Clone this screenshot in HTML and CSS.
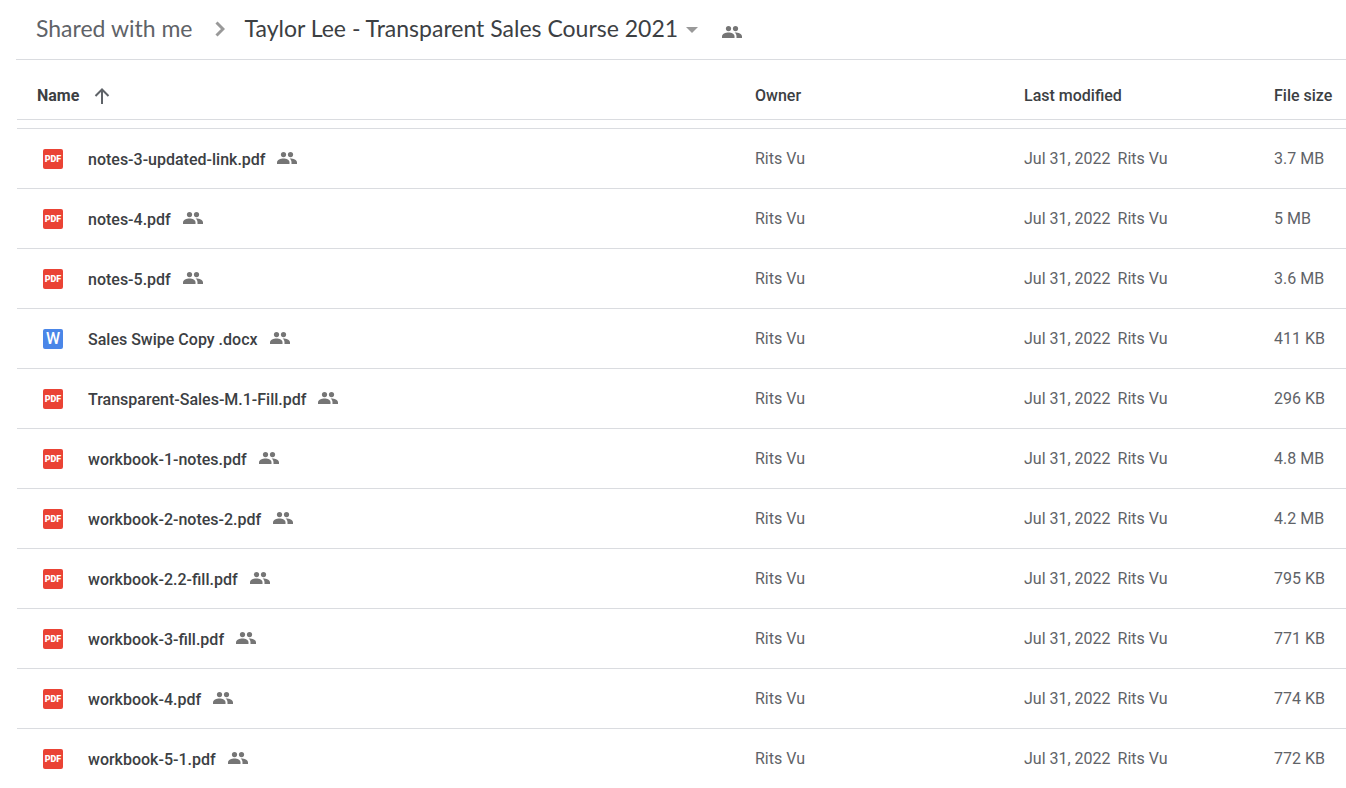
FILE: index.html
```html
<!DOCTYPE html>
<html lang="en">
<head>
  <meta charset="utf-8">
  <meta name="viewport" content="width=device-width, initial-scale=1">
  <title>Taylor Lee - Transparent Sales Course 2021</title>
  <link rel="stylesheet" href="styles.css">
</head>
<body>

  <!-- icons used in the rows below -->
  <svg class="sprite" aria-hidden="true">
    <symbol id="people" viewBox="2 5 20 12">
      <circle cx="8.5" cy="7.6" r="2.6"/>
      <circle cx="15.5" cy="7.6" r="2.6"/>
      <path d="M2 17v-1.5C2 12.700 5.500 11.500 8.500 11.500s6 1.200 6 4V17z"/>
      <path d="M15 11.500c3.500 0 7 1.200 7 4V17h-5.500v-1.500c0-1.600-.6-2.900-1.900-4z"/>
    </symbol>
    <symbol id="pdf" viewBox="0 0 20 20">
      <rect width="20" height="20" rx="2" fill="#ea4335"/>
      <text x="10" y="13" class="pdf-text">PDF</text>
    </symbol>
    <symbol id="word" viewBox="0 0 20 20">
      <rect width="20" height="20" rx="2" fill="#4a86e8"/>
      <text x="10" y="15" class="word-text">W</text>
    </symbol>
  </svg>

  <header class="path">
    <a href="#shared" class="parent">Shared with me</a>
    <svg class="chevron" viewBox="0 0 10 16" aria-hidden="true"><path d="M1.500 1.500L8 8l-6.500 6.500"/></svg>
    <button type="button" class="folder">
      Taylor Lee - Transparent Sales Course 2021
      <span class="caret"></span>
    </button>
    <svg class="people" role="img" aria-label="Shared"><use href="#people"/></svg>
  </header>

  <main>
    <table class="files">
      <thead>
        <tr>
          <th class="name" scope="col" aria-sort="ascending">
            <button type="button" class="sort">Name
              <svg viewBox="0 0 16 16" aria-hidden="true"><path d="M8 16V2M1.500 8L8 1.500 14.500 8"/></svg>
            </button>
          </th>
          <th class="owner" scope="col">Owner</th>
          <th class="modified" scope="col">Last modified</th>
          <th class="size" scope="col">File size</th>
        </tr>
      </thead>
      <tbody>
        <tr>
          <td><div class="file"><svg class="type"><use href="#pdf"/></svg><a href="#">notes-3-updated-link.pdf</a><svg class="people"><use href="#people"/></svg></div></td>
          <td>Rits Vu</td>
          <td>Jul 31, 2022 <span class="by">Rits Vu</span></td>
          <td>3.7 MB</td>
        </tr>
        <tr>
          <td><div class="file"><svg class="type"><use href="#pdf"/></svg><a href="#">notes-4.pdf</a><svg class="people"><use href="#people"/></svg></div></td>
          <td>Rits Vu</td>
          <td>Jul 31, 2022 <span class="by">Rits Vu</span></td>
          <td>5 MB</td>
        </tr>
        <tr>
          <td><div class="file"><svg class="type"><use href="#pdf"/></svg><a href="#">notes-5.pdf</a><svg class="people"><use href="#people"/></svg></div></td>
          <td>Rits Vu</td>
          <td>Jul 31, 2022 <span class="by">Rits Vu</span></td>
          <td>3.6 MB</td>
        </tr>
        <tr>
          <td><div class="file"><svg class="type"><use href="#word"/></svg><a href="#">Sales Swipe Copy .docx</a><svg class="people"><use href="#people"/></svg></div></td>
          <td>Rits Vu</td>
          <td>Jul 31, 2022 <span class="by">Rits Vu</span></td>
          <td>411 KB</td>
        </tr>
        <tr>
          <td><div class="file"><svg class="type"><use href="#pdf"/></svg><a href="#">Transparent-Sales-M.1-Fill.pdf</a><svg class="people"><use href="#people"/></svg></div></td>
          <td>Rits Vu</td>
          <td>Jul 31, 2022 <span class="by">Rits Vu</span></td>
          <td>296 KB</td>
        </tr>
        <tr>
          <td><div class="file"><svg class="type"><use href="#pdf"/></svg><a href="#">workbook-1-notes.pdf</a><svg class="people"><use href="#people"/></svg></div></td>
          <td>Rits Vu</td>
          <td>Jul 31, 2022 <span class="by">Rits Vu</span></td>
          <td>4.8 MB</td>
        </tr>
        <tr>
          <td><div class="file"><svg class="type"><use href="#pdf"/></svg><a href="#">workbook-2-notes-2.pdf</a><svg class="people"><use href="#people"/></svg></div></td>
          <td>Rits Vu</td>
          <td>Jul 31, 2022 <span class="by">Rits Vu</span></td>
          <td>4.2 MB</td>
        </tr>
        <tr>
          <td><div class="file"><svg class="type"><use href="#pdf"/></svg><a href="#">workbook-2.2-fill.pdf</a><svg class="people"><use href="#people"/></svg></div></td>
          <td>Rits Vu</td>
          <td>Jul 31, 2022 <span class="by">Rits Vu</span></td>
          <td>795 KB</td>
        </tr>
        <tr>
          <td><div class="file"><svg class="type"><use href="#pdf"/></svg><a href="#">workbook-3-fill.pdf</a><svg class="people"><use href="#people"/></svg></div></td>
          <td>Rits Vu</td>
          <td>Jul 31, 2022 <span class="by">Rits Vu</span></td>
          <td>771 KB</td>
        </tr>
        <tr>
          <td><div class="file"><svg class="type"><use href="#pdf"/></svg><a href="#">workbook-4.pdf</a><svg class="people"><use href="#people"/></svg></div></td>
          <td>Rits Vu</td>
          <td>Jul 31, 2022 <span class="by">Rits Vu</span></td>
          <td>774 KB</td>
        </tr>
        <tr>
          <td><div class="file"><svg class="type"><use href="#pdf"/></svg><a href="#">workbook-5-1.pdf</a><svg class="people"><use href="#people"/></svg></div></td>
          <td>Rits Vu</td>
          <td>Jul 31, 2022 <span class="by">Rits Vu</span></td>
          <td>772 KB</td>
        </tr>
      </tbody>
    </table>
  </main>

</body>
</html>
```
FILE: styles.css
```css
* {
  box-sizing: border-box;
}

body {
  margin: 0;
  background: #fff;
  color: #5f6368;
  font-family: Roboto, Arial, sans-serif;
  font-size: 16px;
}

a {
  color: inherit;
  text-decoration: none;
}

button {
  padding: 0;
  border: 0;
  background: none;
  color: inherit;
  font: inherit;
  cursor: pointer;
}

.sprite {
  display: none;
}

/* breadcrumb */
.path {
  display: flex;
  align-items: center;
  height: 60px;
  margin-left: 16px;
  padding: 0 20px 4px;
  border-bottom: 1px solid #dadce0;
  font-family: Lato, Roboto, sans-serif;
  font-size: 23px;
  white-space: nowrap;
}

.chevron {
  width: 10px;
  height: 16px;
  margin: 2px 20px 0 22px;
  fill: none;
  stroke: #999;
  stroke-width: 3;
}

.folder {
  display: flex;
  align-items: center;
  color: #3c4043;
}

.caret {
  margin: 4px 0 0 8px;
  border: 6px solid transparent;
  border-top-color: #999;
  border-bottom: 0;
}

.people {
  flex: none;
  width: 20px;
  height: 12px;
  fill: #757575;
}

.path .people {
  height: 14px;
  margin: 8px 0 0 24px;
}

/* file list */
main {
  margin-left: 17px;
}

.files {
  width: 100%;
  table-layout: fixed;
  border-spacing: 0;
}

.files th,
.files td {
  height: 60px;
  padding: 0;
  text-align: left;
  white-space: nowrap;
}

.files th {
  padding-top: 12px;
  border-bottom: 1px solid #dadce0;
  color: #3c4043;
  font-weight: 500;
}

.files td {
  border-top: 1px solid #dadce0;
}

.files tbody::before {
  content: "";
  display: block;
  height: 8px;
}

.owner {
  width: 269px;
}

.modified {
  width: 250px;
}

.size {
  width: 72px;
}

.sort {
  display: flex;
  align-items: center;
  gap: 15px;
  margin-left: 20px;
  font-weight: 700;
}

.sort svg {
  width: 16px;
  height: 16px;
  fill: none;
  stroke: #5f6368;
  stroke-width: 2;
}

.file {
  display: flex;
  align-items: center;
  margin-left: 26px;
  color: #3c4043;
  font-weight: 500;
}

.file a {
  margin: 2px 12px 0 25px;
}

.file .people {
  margin-bottom: 2px;
}

.by {
  margin-left: 3px;
}

.type {
  flex: none;
  width: 20px;
  height: 20px;
}

.pdf-text,
.word-text {
  fill: #fff;
  font-family: Roboto, sans-serif;
  font-size: 9px;
  font-weight: 900;
  text-anchor: middle;
}

.word-text {
  font-size: 16px;
  font-weight: 500;
}
```
